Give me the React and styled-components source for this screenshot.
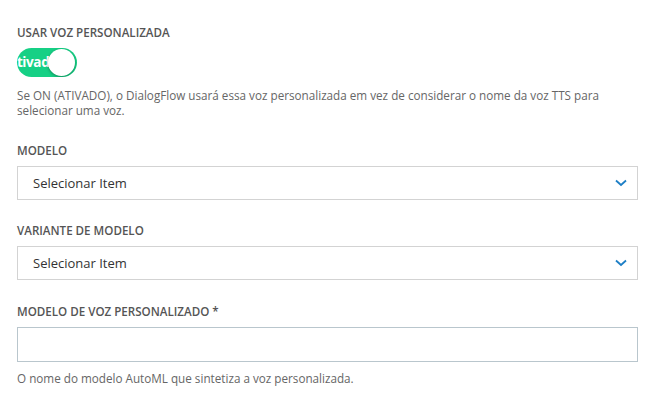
import React from 'react';
import styled, { createGlobalStyle } from 'styled-components';

const Global = createGlobalStyle`
    body {
        margin: 0;
        background: #fff;
        font-family: "Open Sans", "Noto Sans", sans-serif;
    }
`

const Form = styled.div`
    width: 621px;
    padding: 25px 0 0 17px;
    display: flex;
    flex-direction: column;
`

const Field = styled.div`
    display: flex;
    flex-direction: column;
    margin-bottom: ${props => props.$mb || 0}px;
`

const Label = styled.label`
    font-size: 11.6px;
    font-weight: 600;
    color: #555;
    text-transform: uppercase;
    line-height: 16px;
    margin-bottom: 7px;
`

const Toggle = styled.div`
    position: relative;
    width: 60px;
    height: 29px;
    border-radius: 15px;
    background: #16d085;
    overflow: hidden;
    margin-bottom: 11px;
`

const ToggleText = styled.span`
    position: absolute;
    left: -9px;
    top: 0;
    line-height: 29px;
    font-size: 13.5px;
    font-weight: 700;
    color: #fff;
    letter-spacing: -0.4px;
`

const Knob = styled.span`
    position: absolute;
    right: 2px;
    top: 1px;
    width: 27px;
    height: 27px;
    border-radius: 50%;
    background: #fff;
    box-shadow: 0 1px 3px rgba(0, 0, 0, 0.35);
`

const Help = styled.p`
    margin: 0;
    font-size: 11.7px;
    line-height: 15px;
    color: #666;
`

const SelectBox = styled.div`
    height: 32px;
    border: 1px solid #d3d3d3;
    display: flex;
    align-items: center;
    justify-content: space-between;
    padding: 0 10px 0 15px;
    font-size: 13px;
    color: #333;
`

const Input = styled.input`
    height: 33px;
    border: 1px solid #b9c6cd;
    padding: 0 10px;
    margin: 0 0 9px;
    font-family: inherit;
    outline: none;
`

const Chevron = () => (
    <svg width="12" height="8" viewBox="0 0 12 8">
        <path d="M1 1.5 L6 6 L11 1.5" fill="none" stroke="#1d7fc6" strokeWidth="1.8" />
    </svg>
)

export default function App() {
    return (
        <>
            <Global />
            <Form>
                <Field $mb={25}>
                    <Label>Usar voz personalizada</Label>
                    <Toggle>
                        <ToggleText>Ativado</ToggleText>
                        <Knob />
                    </Toggle>
                    <Help>
                        Se ON (ATIVADO), o DialogFlow usará essa voz personalizada em vez de considerar o nome da voz TTS para
                        selecionar uma voz.
                    </Help>
                </Field>
                <Field $mb={23}>
                    <Label>Modelo</Label>
                    <SelectBox>
                        Selecionar Item
                        <Chevron />
                    </SelectBox>
                </Field>
                <Field $mb={24}>
                    <Label>Variante de modelo</Label>
                    <SelectBox>
                        Selecionar Item
                        <Chevron />
                    </SelectBox>
                </Field>
                <Field>
                    <Label>Modelo de voz personalizado *</Label>
                    <Input />
                    <Help>O nome do modelo AutoML que sintetiza a voz personalizada.</Help>
                </Field>
            </Form>
        </>
    )
}
